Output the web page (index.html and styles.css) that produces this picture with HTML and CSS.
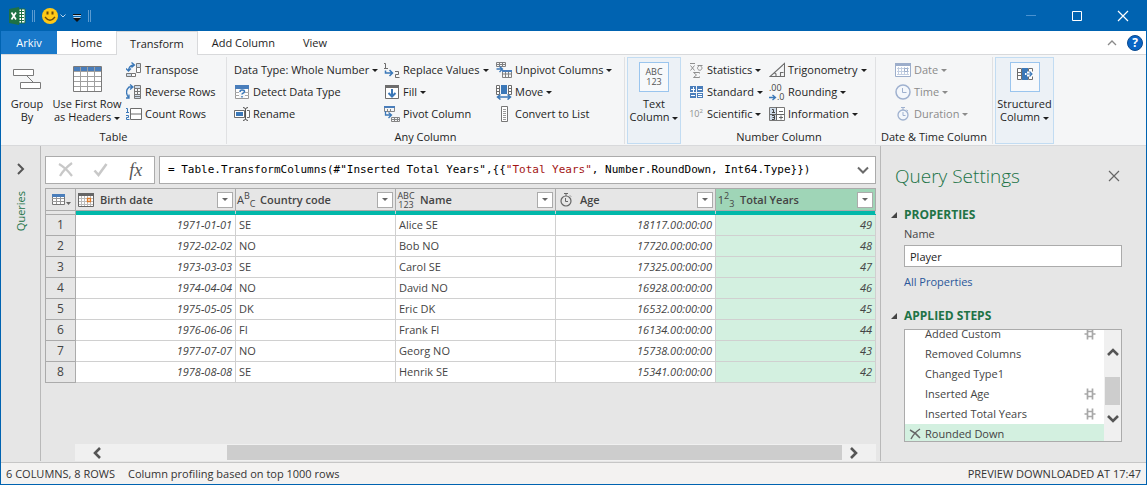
FILE: index.html
```
<!DOCTYPE html>
<html lang="en">
<head>
<meta charset="utf-8">
<title>Player - Power Query Editor</title>
<link rel="stylesheet" href="styles.css">
</head>
<body>
<svg class="defs" aria-hidden="true">
  <symbol id="gear" viewBox="0 0 12 12"><path d="M3.500 3.500h5v5h-5zM3.500 .500v3M8.500 .500v3M3.500 8.500v3M8.500 8.500v3M.500 6h3M8.500 6h3" fill="none" stroke="#a8a8a8" stroke-width="1.700"/></symbol>
</svg>
<div class="window">
  <header class="titlebar">
    <svg width="90" height="24" viewBox="0 0 90 24">
      <path d="M8 5l10-2v18l-10-2z" fill="#1e7145"/>
      <path d="M18 5h6v14h-6z" fill="#fff" stroke="#1e7145"/>
      <path d="M18 7.500h5M18 10.500h5M18 13.500h5M18 16.500h5M20.500 5v14" stroke="#1e7145"/>
      <path d="M10.500 8.500l4.500 7M15 8.500l-4.500 7" stroke="#fff" stroke-width="1.700"/>
      <path d="M31.500 6v12M33.500 6v12M87.500 6v12M89.500 6v12" stroke="#5b9bd1"/>
      <circle cx="49" cy="12" r="8" fill="#ffc916"/>
      <path d="M46.500 7.500v3M51.500 7.500v3" stroke="#6b4a0c" stroke-width="2"/>
      <path d="M44 13q5 6.500 10 0" fill="none" stroke="#6b4a0c" stroke-width="1.300"/>
      <path d="M59.500 10.500l2.500 2.500l2.500-2.500" fill="none" stroke="#b9d4ec"/>
      <path d="M72 10.500h8" stroke="#111"/><path d="M72 11.500h8" stroke="#b9d4ec"/><path d="M72 14h8l-4 4z" fill="#111"/><path d="M72.500 13.500h7" stroke="#b9d4ec"/>
    </svg>
    <div class="window-buttons">
      <button aria-label="Minimize"><svg width="12" height="12"><path d="M1 5.500h10" stroke="#4a92d0"/></svg></button>
      <button aria-label="Maximize"><svg width="12" height="12"><path d="M1.500 1.500h9v9h-9z" fill="none" stroke="#fff"/></svg></button>
      <button aria-label="Close"><svg width="12" height="12"><path d="M1 1l10 10M11 1l-10 10" stroke="#fff" stroke-width="1.200"/></svg></button>
    </div>
  </header>

  <nav class="tabs">
    <button class="tab file">Arkiv</button>
    <button class="tab">Home</button>
    <button class="tab active">Transform</button>
    <button class="tab">Add Column</button>
    <button class="tab">View</button>
    <div class="tabs-end">
      <button aria-label="Collapse ribbon"><svg width="10" height="8"><path d="M1 6l4-4l4 4" fill="none" stroke="#8a8a8a" stroke-width="1.300"/></svg></button>
      <button class="help" aria-label="Help">?</button>
    </div>
  </nav>

  <section class="ribbon">
    <div class="group g-table">
      <div class="tools">
        <button class="big"><svg width="30" height="30"><path d="M15 12l6 6" stroke="#7a7a7a"/><path d="M1.500 5.500h20v6h-20zM8.500 18.500h20v6h-20z" fill="#fff" stroke="#7a7a7a"/></svg><span>Group<br>By</span></button>
        <button class="big"><svg width="30" height="30"><path d="M1.500 2.500h28v25h-28z" fill="#fff" stroke="#7a7a7a"/><path d="M2 3h27v4h-27z" fill="#4a7ebb"/><path d="M8.500 3v24M15.500 3v24M22.500 3v24M2 7.500h27M2 12.500h27M2 17.500h27M2 22.500h27" stroke="#a0a0a0"/></svg><span>Use First Row<br>as Headers <i class="caret"></i></span></button>
        <div class="stack">
          <button><svg width="16" height="16"><path d="M10.500 1.500h4v4h-4z" fill="#cfdcea" stroke="#777"/><path d="M10.500 5.500h4v5h-4zM5.500 11.500h4v3h-4z" fill="#fff" stroke="#777"/><path d="M.5 11.500h5v3h-5z" fill="#cfdcea" stroke="#777"/><path d="M2.500 9q0-5 5-6M5.500 .5l3 2.500l-3 2.500M0 6.500l2.500 2.500l2.500-2.500" fill="none" stroke="#3b78b8" stroke-width="1.300"/></svg>Transpose</button>
          <button><svg width="16" height="16"><path d="M8.500 1.500h6v3h-6zM8.500 10.500h6v4h-6z" fill="#cfdcea" stroke="#777"/><path d="M8.500 4.500h6v6h-6zM8 7.500h7M11.500 5v5M8 12.500h7" fill="none" stroke="#777"/><path d="M3 14q-5-6 0-11h3M4 .5l3 2.500l-3 2.500M3 10.500v3.500h-3" fill="none" stroke="#3b78b8" stroke-width="1.300"/></svg>Reverse Rows</button>
          <button><svg width="16" height="16"><path d="M4.500 2.500h11v11h-11zM4.500 8h11" fill="#fff" stroke="#6d6d6d"/><path d="M0 2.500h1.500v4M0 6.500h3M0 9.500h2.500v2h-2v2h3" fill="none" stroke="#3b78b8"/></svg>Count Rows</button>
        </div>
      </div>
      <div class="group-label">Table</div>
    </div>

    <div class="group g-any">
      <div class="tools">
        <div class="stack">
          <button>Data Type: Whole Number <i class="caret"></i></button>
          <button><svg width="16" height="16"><path d="M1.500 2.500h13v12h-13z" fill="#fff" stroke="#999"/><path d="M1 1h14v4h-14z" fill="#4a7ebb"/><path d="M1 8.500h14M1 11.500h14M5.500 5v9M10.500 5v9" stroke="#aaa"/><path d="M5 5h6v9h-6z" fill="#f5f6f7"/><path d="M6 8q0-2 2-2q2.500 0 2.500 1.500q0 1-1.200 1.500q-1.300.5-1.300 1.500M8 12v1.500" fill="none" stroke="#3b78b8" stroke-width="1.500"/></svg>Detect Data Type</button>
          <button><svg width="16" height="16"><path d="M.5 4.500h10v7h-10zM13 4.500h2.500v7h-2.500" fill="#fff" stroke="#6d6d6d"/><path d="M2 6h7v4h-7z" fill="#3b78b8"/><path d="M9 1.500q2.500 0 2.500 2v9q0 2-2.500 2M14 1.500q-2.500 0-2.500 2v9q0 2 2.500 2" fill="none" stroke="#555"/></svg>Rename</button>
        </div>
        <div class="stack">
          <button><svg width="16" height="16"><path d="M0 1.500h1.500v5M0 6.500h4M11 9.500h3.500v3h-3v3h4" fill="none" stroke="#6d6d6d"/><path d="M1.500 8.500v2.500h6M5.500 8l3 3l-3 3" fill="none" stroke="#3b78b8" stroke-width="1.500"/></svg>Replace Values <i class="caret"></i></button>
          <button><svg width="16" height="16"><path d="M1.500 1.500h13v13h-13z" fill="#fff" stroke="#6d6d6d"/><path d="M1 1h14v3h-14z" fill="#6d6d6d"/><path d="M8 5v8M4.500 9l3.500 3.500l3.500-3.500" fill="none" stroke="#3b78b8" stroke-width="2"/></svg>Fill <i class="caret"></i></button>
          <button><svg width="16" height="16"><path d="M.5 .5h10v5h-10zM3.500 3v3M6.500 3v3M7.500 11.500h8v4h-8zM7.500 13.500h8M10.500 11v4M13.500 11v4" fill="none" stroke="#858585"/><path d="M0 0h11v2h-11z" fill="#4a7ebb"/><path d="M1.500 5v4h5M4.500 6.500l3 2.500l-3 3" fill="none" stroke="#3b78b8" stroke-width="1.300"/></svg>Pivot Column</button>
        </div>
        <div class="stack">
          <button><svg width="16" height="16"><path d="M.5 .5h9v4h-9zM.5 2.500h9M3.500 0v4M6.500 0v4M6.500 8.500h9v7h-9zM6.500 12h9M9.500 9v6M12.500 9v6" fill="none" stroke="#808080"/><path d="M6 8h10v2h-10z" fill="#4a7ebb"/><path d="M.5 7h5M3.500 4.500l3 2.500l-3 3" fill="none" stroke="#3b78b8" stroke-width="1.300"/></svg>Unpivot Columns <i class="caret"></i></button>
          <button><svg width="16" height="16"><path d="M.5 1.500h3v9h-3zM.5 4.500h3M.5 7.500h3M12.500 1.500h3v9h-3zM12.500 4.500h3M12.500 7.500h3" fill="#fff" stroke="#6d6d6d"/><path d="M5 1h6v9h-6z" fill="#3b78b8"/><path d="M2 13h12M4.500 10.500l-3 2.500l3 2.500M11.500 10.500l3 2.500l-3 2.500" fill="none" stroke="#3b78b8" stroke-width="1.500"/></svg>Move <i class="caret"></i></button>
          <button><svg width="16" height="16"><path d="M5.500 .5h6v15h-6z" fill="#fff" stroke="#777"/><path d="M7 3.500h3M7 5.500h3M7 7.500h3M7 9.500h3M7 11.500h3M7 13.500h3" stroke="#999"/></svg>Convert to List</button>
        </div>
      </div>
      <div class="group-label">Any Column</div>
    </div>

    <div class="group tile-group"><button class="big tile"><span class="tile-icon">ABC<br>123</span><span>Text<br>Column <i class="caret"></i></span></button></div>

    <div class="group g-number">
      <div class="tools">
        <div class="stack">
          <button><svg width="16" height="16"><path d="M2 1.500h5M2.500 3.500l4 5M6.500 3.500l-4 5M9.500 3.500h5M11 4a2.200 2.200 0 1 0 1.500 0M11.500 11.500v-1h-6l3 2.500l-3 2.500h6v-1" fill="none" stroke="#8f8f8f"/></svg>Statistics <i class="caret"></i></button>
          <button><svg width="16" height="16"><path d="M2 2h6v6h-6zM9 2h6v6h-6zM2 9h6v5h-6zM9 9h6v5h-6z" fill="#4a7ebb"/><path d="M3 5.500h4M5.500 3v5M10 5.500h4M3 11.500h4M10 10.500h4M10 12.500h4" stroke="#fff"/></svg>Standard <i class="caret"></i></button>
          <button><span class="sci">10<sup>2</sup></span>Scientific <i class="caret"></i></button>
        </div>
        <div class="stack">
          <button><svg width="16" height="16"><path d="M1 14.500h14.500v-13zM7 14v-2l-2-1.500M11.500 14v-3.500h3" fill="none" stroke="#6d6d6d" stroke-width="1.100"/></svg>Trigonometry <i class="caret"></i></button>
          <button><span class="round"><span>.00</span><span><svg width="8" height="9"><path d="M0 5.500h6M3.500 3l3 2.500l-3 2.500" fill="none" stroke="#3b78b8" stroke-width="1.300"/></svg>.0</span></span>Rounding <i class="caret"></i></button>
          <button><svg width="16" height="16"><path d="M.5 1.500h15v13h-15z" fill="#fff" stroke="#777"/><path d="M1 2h6v12h-6z" fill="#cfdcea"/><path d="M7.500 1v13M1 8.500h14M10 5.500h4M10 11.500h4M12 9.500v4" stroke="#666"/><path d="M3 3.500h1.500v3M3 6.500h3M3 9.500h2.500v4h-2.500M3.500 11.500h2" fill="none" stroke="#444"/></svg>Information <i class="caret"></i></button>
        </div>
      </div>
      <div class="group-label">Number Column</div>
    </div>

    <div class="group g-date">
      <div class="tools">
        <div class="stack">
          <button disabled><svg width="16" height="16"><path d="M.5 1.500h15v13h-15z" fill="#fff" stroke="#9daecb"/><path d="M0 1h16v3h-16z" fill="#9daecb"/><path d="M3.500 5v8M6.500 5v8M9.500 5v8M12.500 5v8M2 6.500h12M2 9.500h12M2 12.500h12" stroke="#c3cfe2"/><path d="M9.500 6.500h3v3h-3z" fill="#fff" stroke="#9daecb"/></svg>Date <i class="caret"></i></button>
          <button disabled><svg width="16" height="16"><circle cx="8" cy="8" r="7" fill="#f4f7fb" stroke="#9fb1cf" stroke-width="1.500"/><path d="M7.500 4v4.500h4" fill="none" stroke="#9fb1cf"/></svg>Time <i class="caret"></i></button>
          <button disabled><svg width="16" height="16"><circle cx="8" cy="9" r="5" fill="#f4f7fb" stroke="#9fb1cf" stroke-width="1.300"/><path d="M6 1.500h4M8 2v2M8 6v3.500h2.500M11.500 4l1.500 1" fill="none" stroke="#9fb1cf"/></svg>Duration <i class="caret"></i></button>
        </div>
      </div>
      <div class="group-label">Date &amp; Time Column</div>
    </div>

    <div class="group tile-group last"><button class="big tile"><span class="tile-icon"><svg width="18" height="14"><path d="M1.500 1.500h4v11h-4zM1.500 5.500h4M1.500 8.500h4M12.500 1.500h4v11h-4z" fill="#fff" stroke="#6d6d6d"/><path d="M6 1h6v12h-6z" fill="#3b78b8"/><path d="M11 7h6" stroke="#fff" stroke-width="5"/><path d="M9 7h3" stroke="#fff" stroke-width="2"/><path d="M10 7h6M13.500 4.500l2.500 2.500l-2.500 2.500" fill="none" stroke="#3b78b8" stroke-width="1.200"/></svg></span><span>Structured<br>Column <i class="caret"></i></span></button></div>
  </section>

  <main class="workspace">
    <aside class="queries">
      <button aria-label="Expand queries"><svg width="10" height="12"><path d="M2 1l5 5l-5 5" fill="none" stroke="#555" stroke-width="2"/></svg></button>
      <span>Queries</span>
    </aside>

    <section class="preview">
      <div class="formula-bar">
        <div class="formula-actions">
          <button aria-label="Cancel"><svg width="16" height="16"><path d="M1 2q7 4 13 12M14 1q-8 6-12 13" fill="none" stroke="#c8c8c8" stroke-width="2.200"/></svg></button>
          <button aria-label="Commit"><svg width="16" height="16"><path d="M1.500 8.500l4 4.500l8-11" fill="none" stroke="#c8c8c8" stroke-width="2.600"/></svg></button>
          <button class="fx" aria-label="Insert step">fx</button>
        </div>
        <div class="formula"><code>= Table.TransformColumns(#"Inserted Total Years",{{<span>"Total Years"</span>, Number.RoundDown, Int64.Type}})</code>
          <button aria-label="Expand formula"><svg width="12" height="8"><path d="M1 1.500l5 5l5-5" fill="none" stroke="#6a6a6a" stroke-width="2"/></svg></button>
        </div>
      </div>

      <table class="grid">
        <thead>
          <tr>
            <th class="corner"><button aria-label="Table options"><svg width="20" height="14"><path d="M1.500 2.500h12v9h-12z" fill="#fff" stroke="#777"/><path d="M5.500 3v8M9.500 3v8M1 5.500h12M1 8.500h12" stroke="#999"/><path d="M1 1h13v3h-13z" fill="#4a7ebb"/><path d="M15 9h5l-2.500 3z" fill="#666"/></svg></button></th>
            <th><div class="head"><svg width="18" height="16"><path d="M1.500 1.500h15v13h-15z" fill="#fff" stroke="#666"/><path d="M1 1h16v3h-16z" fill="#666"/><path d="M4.500 4v10M7.500 4v10M10.500 4v10M13.500 4v10M2 6.500h14M2 9.500h14M2 12.500h14" stroke="#bbb"/><path d="M10.500 6.500h3v3h-3z" fill="#fff" stroke="#e07b28" stroke-width="1.300"/></svg><span>Birth date</span><button class="filter" aria-label="Filter Birth date"></button></div></th>
            <th><div class="head"><span class="type abc">A<sup>B</sup><sub>C</sub></span><span>Country code</span><button class="filter" aria-label="Filter Country code"></button></div></th>
            <th><div class="head"><span class="type any">ABC<br>123</span><span>Name</span><button class="filter" aria-label="Filter Name"></button></div></th>
            <th><div class="head"><svg width="18" height="16"><circle cx="9" cy="9" r="5" fill="none" stroke="#666" stroke-width="1.200"/><path d="M7 1.500h4M9 2v2M8.500 6v3.500h2.500M13 3.500l1 1" fill="none" stroke="#666"/></svg><span>Age</span><button class="filter" aria-label="Filter Age"></button></div></th>
            <th class="selected"><div class="head"><span class="type num">1<sup>2</sup><sub>3</sub></span><span>Total Years</span><button class="filter" aria-label="Filter Total Years"></button></div></th>
          </tr>
          <tr class="quality"><td></td><td></td><td></td><td></td><td></td><td></td></tr>
        </thead>
        <tbody>
          <tr><th>1</th><td>1971-01-01</td><td>SE</td><td>Alice SE</td><td>18117.00:00:00</td><td>49</td></tr>
          <tr><th>2</th><td>1972-02-02</td><td>NO</td><td>Bob NO</td><td>17720.00:00:00</td><td>48</td></tr>
          <tr><th>3</th><td>1973-03-03</td><td>SE</td><td>Carol SE</td><td>17325.00:00:00</td><td>47</td></tr>
          <tr><th>4</th><td>1974-04-04</td><td>NO</td><td>David NO</td><td>16928.00:00:00</td><td>46</td></tr>
          <tr><th>5</th><td>1975-05-05</td><td>DK</td><td>Eric DK</td><td>16532.00:00:00</td><td>45</td></tr>
          <tr><th>6</th><td>1976-06-06</td><td>FI</td><td>Frank FI</td><td>16134.00:00:00</td><td>44</td></tr>
          <tr><th>7</th><td>1977-07-07</td><td>NO</td><td>Georg NO</td><td>15738.00:00:00</td><td>43</td></tr>
          <tr><th>8</th><td>1978-08-08</td><td>SE</td><td>Henrik SE</td><td>15341.00:00:00</td><td>42</td></tr>
        </tbody>
      </table>

      <div class="hscroll">
        <button aria-label="Scroll left"><svg width="10" height="12"><path d="M8 1l-5 5l5 5" fill="none" stroke="#555" stroke-width="2.600"/></svg></button>
        <div class="htrack"><div class="hthumb"></div></div>
        <button class="forward" aria-label="Scroll right"><svg width="10" height="12"><path d="M2 1l5 5l-5 5" fill="none" stroke="#555" stroke-width="2.600"/></svg></button>
      </div>
    </section>

    <aside class="settings">
      <div class="settings-head"><h1>Query Settings</h1><button aria-label="Close pane"><svg width="12" height="12"><path d="M1 1l10 10M11 1l-10 10" stroke="#666" stroke-width="1.200"/></svg></button></div>
      <h2>PROPERTIES</h2>
      <div class="section">
        <label for="query-name">Name</label>
        <input id="query-name" type="text" value="Player">
        <a href="#properties">All Properties</a>
      </div>
      <h2>APPLIED STEPS</h2>
      <div class="steps">
        <ul>
          <li><span>Added Custom</span><svg width="12" height="12"><use href="#gear"/></svg></li>
          <li><span>Removed Columns</span></li>
          <li><span>Changed Type1</span></li>
          <li><span>Inserted Age</span><svg width="12" height="12"><use href="#gear"/></svg></li>
          <li><span>Inserted Total Years</span><svg width="12" height="12"><use href="#gear"/></svg></li>
          <li class="current"><button aria-label="Delete step"><svg width="12" height="12"><path d="M1 2q6 3 10 8M11 1q-6 4-9 10" fill="none" stroke="#666" stroke-width="1.400"/></svg></button><span>Rounded Down</span></li>
        </ul>
        <div class="vscroll">
          <button aria-label="Scroll up"><svg width="12" height="10"><path d="M1 8l5-5l5 5" fill="none" stroke="#555" stroke-width="2.600"/></svg></button>
          <div class="vthumb"></div>
          <button aria-label="Scroll down"><svg width="12" height="10"><path d="M1 2l5 5l5-5" fill="none" stroke="#555" stroke-width="2.600"/></svg></button>
        </div>
      </div>
    </aside>
  </main>

  <footer class="status"><span>6 COLUMNS, 8 ROWS</span><span>Column profiling based on top 1000 rows</span><span class="end">PREVIEW DOWNLOADED AT 17:47</span></footer>
</div>
</body>
</html>
```

FILE: styles.css
```
* { box-sizing: border-box; }
body { margin: 0; font: 11px/14px "Open Sans", "Noto Sans", sans-serif; color: #1e1e1e; }
button { border: 0; padding: 0; background: none; font: inherit; color: inherit; display: flex; align-items: center; justify-content: center; white-space: nowrap; }
svg { display: block; flex: none; }
.defs { position: absolute; width: 0; height: 0; }

.window { min-height: 100vh; display: flex; flex-direction: column; border: 1px solid #0063b1; border-top: 0; background: #e6e6e6; }

.titlebar { height: 31px; background: #0063b1; display: flex; align-items: center; justify-content: space-between; }
.window-buttons { display: flex; }
.window-buttons button { width: 46px; height: 30px; }

.tabs { height: 24px; display: flex; background: #fff; border-bottom: 1px solid #d8d9db; }
.tab { padding: 0 14px; height: 23px; }
.tab.file { width: 56px; background: #1979ca; color: #fff; }
.tab.active { height: 24px; padding: 0 13px; background: #f5f6f7; border: 1px solid #d8d9db; border-bottom: 0; }
.tabs-end { margin-left: auto; display: flex; align-items: center; gap: 10px; padding-right: 3px; }
.help { width: 16px; height: 16px; border: 1px solid #0a4a90; border-radius: 8px; background: #0a64c4; color: #fff; font-weight: 700; font-size: 12px; }

.ribbon { height: 91px; display: flex; background: #f5f6f7; border-bottom: 1px solid #d8d9db; padding-top: 2px; white-space: nowrap; }
.group { height: 87px; display: flex; flex-direction: column; border-right: 1px solid #e0e1e3; }
.tools { display: flex; flex: 1; padding-top: 2px; }
.group-label { text-align: center; line-height: 14px; }
.stack { display: flex; flex-direction: column; }
.stack button { height: 22px; justify-content: flex-start; gap: 3px; }
.stack button:disabled { color: #8b8b8b; }
.big { flex-direction: column; justify-content: flex-start; line-height: 13px; padding-top: 5px; gap: 3px; height: 66px; }
.caret { display: inline-block; width: 0; height: 0; border: 3px solid transparent; border-top-color: currentColor; border-bottom: 0; vertical-align: middle; }

.g-table { width: 226px; }
.g-table .tools { display: grid; grid-template-columns: 52px 68px 1fr; gap: 0; }
.g-table .stack { padding-left: 5px; }
.g-any { width: 398px; }
.g-any .tools { display: grid; grid-template-columns: 150px 112px 1fr; padding-left: 7px; }
.g-number { width: 195px; padding-left: 2px; }
.g-number .tools { display: grid; grid-template-columns: 81px 1fr; padding-left: 5px; }
.g-date { width: 117px; }
.g-date .tools { padding-left: 19px; }
.tile-group { width: 56px; padding-left: 2px; border: 0; }
.tile-group.last { width: 61px; }
.tile { border: 1px solid #c2dcf2; background: #ecf1f6; height: 87px; padding-top: 4px; gap: 5px; }
.tile-icon { width: 30px; height: 30px; border: 1px solid #9ac5ee; background: #f7f9fb; color: #555; font-size: 9px; line-height: 10px; display: flex; justify-content: center; padding-top: 4px; }
.sci { width: 16px; color: #8f8f8f; font-size: 9px; line-height: 12px; }
.sci sup { font-size: 6px; line-height: 6px; }
.round { width: 16px; font-size: 9px; line-height: 9px; color: #444; }
.round span { display: flex; }

.workspace { flex: 1; display: flex; }
.queries { width: 40px; margin-bottom: 1px; border-right: 1px solid #b9b9b9; display: flex; flex-direction: column; align-items: center; padding-top: 17px; gap: 16px; }
.queries span { writing-mode: vertical-rl; transform: rotate(180deg); color: #217346; }

.preview { flex: 1; min-width: 0; display: flex; flex-direction: column; padding: 10px 4px 1px; }
.formula-bar { display: flex; gap: 4px; height: 28px; margin-bottom: 4px; }
.formula-actions { width: 110px; border: 1px solid #ababab; background: #fff; display: flex; justify-content: space-around; align-items: center; padding: 0 2px; }
.fx { font: italic 18px/20px "Liberation Serif", serif; color: #555; }
.formula { flex: 1; min-width: 0; border: 1px solid #ababab; background: #fff; display: flex; align-items: center; justify-content: space-between; padding: 0 6px 0 8px; }
.formula code { font: 11px/14px "DejaVu Sans Mono", monospace; color: #000; white-space: nowrap; }
.formula code span { color: #a31515; }

.grid { width: 100%; table-layout: fixed; border-collapse: collapse; color: #444; }
.grid th, .grid td { height: 21px; padding: 0 3px; border: 1px solid #d0d0d0; }
.grid td { background: #fff; }
.grid thead th { height: 22px; padding: 0; background: #e6e6e6; border-color: #ababab; }
.grid thead .corner { width: 30px; }
.corner button { margin-left: 5px; }
.head { display: flex; align-items: center; height: 20px; padding: 0 2px 0 1px; gap: 5px; }
.head > span:nth-child(2) { flex: 1; text-align: left; font-weight: 600; }
.filter { width: 16px; height: 16px; border: 1px solid #ababab; background: #fff; color: #666; }
.filter::before { content: ""; border: 3px solid transparent; border-top-color: currentColor; border-bottom: 0; }
.grid .quality td { height: 4px; background: #01b8aa; border-bottom-color: #01b8aa; }
.grid .quality td:first-child { background: #e6e6e6; border-color: #ababab; }
.grid tbody th { background: #e6e6e6; border-color: #ababab; font-weight: 400; font-size: 12px; }
.grid tbody td:nth-child(2), .grid tbody td:nth-child(5), .grid tbody td:nth-child(6) { text-align: right; font-style: italic; }
.grid tbody td:nth-child(6) { background: #d3f0e0; }
.grid thead .selected { background: #9fd5b7; }
.type { width: 18px; flex: none; font-weight: 400; color: #444; white-space: nowrap; }
.type sup, .type sub { font-size: 9px; line-height: 0; }
.type.any { font-size: 9px; line-height: 9px; }

.hscroll { margin: auto 0 0 30px; height: 17px; background: #f0f0f0; display: flex; align-items: center; }
.hscroll button { width: 44px; }
.hscroll .forward { width: 34px; padding-right: 10px; }
.htrack { flex: 1; height: 15px; display: flex; justify-content: flex-end; }
.hthumb { width: 85%; background: #cdcdcd; }

.settings { width: 266px; border-left: 1px solid #b9b9b9; margin-bottom: 1px; padding: 17px 24px 0 14px; color: #444; }
.settings-head { display: flex; justify-content: space-between; align-items: center; height: 26px; }
.settings-head button { padding-right: 2px; }
h1 { margin: 0; font-weight: 300; font-size: 19px; line-height: 26px; color: #217346; }
h2 { margin: 18px 0 0 -4px; font-weight: 700; font-size: 12px; line-height: 16px; color: #217346; display: flex; align-items: center; gap: 7px; }
h2::before { content: ""; border-left: 6px solid transparent; border-bottom: 6px solid #444; }
.section { display: flex; flex-direction: column; padding-left: 9px; }
.section label { line-height: 22px; }
.section input { height: 22px; border: 1px solid #ababab; background: #fff; padding: 0 5px; font: inherit; color: #222; }
.section a { line-height: 14px; margin-top: 8px; color: #2b579a; text-decoration: none; }
.section + h2 { margin-top: 19px; }
.steps { margin: 5px 0 0 9px; height: 113px; border: 1px solid #ababab; background: #fff; display: flex; overflow: hidden; }
.steps ul { list-style: none; margin: -6px 0 0; padding: 0; flex: 1; }
.steps li { display: flex; align-items: center; height: 20px; padding: 0 8px 0 4px; }
.steps li span { flex: 1; margin-left: 16px; }
.steps .current { background: #d3f0e0; }
.steps .current span { margin-left: 4px; }
.vscroll { width: 17px; background: #f0f0f0; padding: 17px 1px 0; display: flex; flex-direction: column; }
.vthumb { height: 28px; margin: 20px 0 9px; background: #cdcdcd; }

.status { height: 22px; border-top: 1px solid #c6c6c6; background: #f3f2f1; display: flex; align-items: center; gap: 13px; padding: 0 5px; color: #333; }
.end { margin-left: auto; }
```
